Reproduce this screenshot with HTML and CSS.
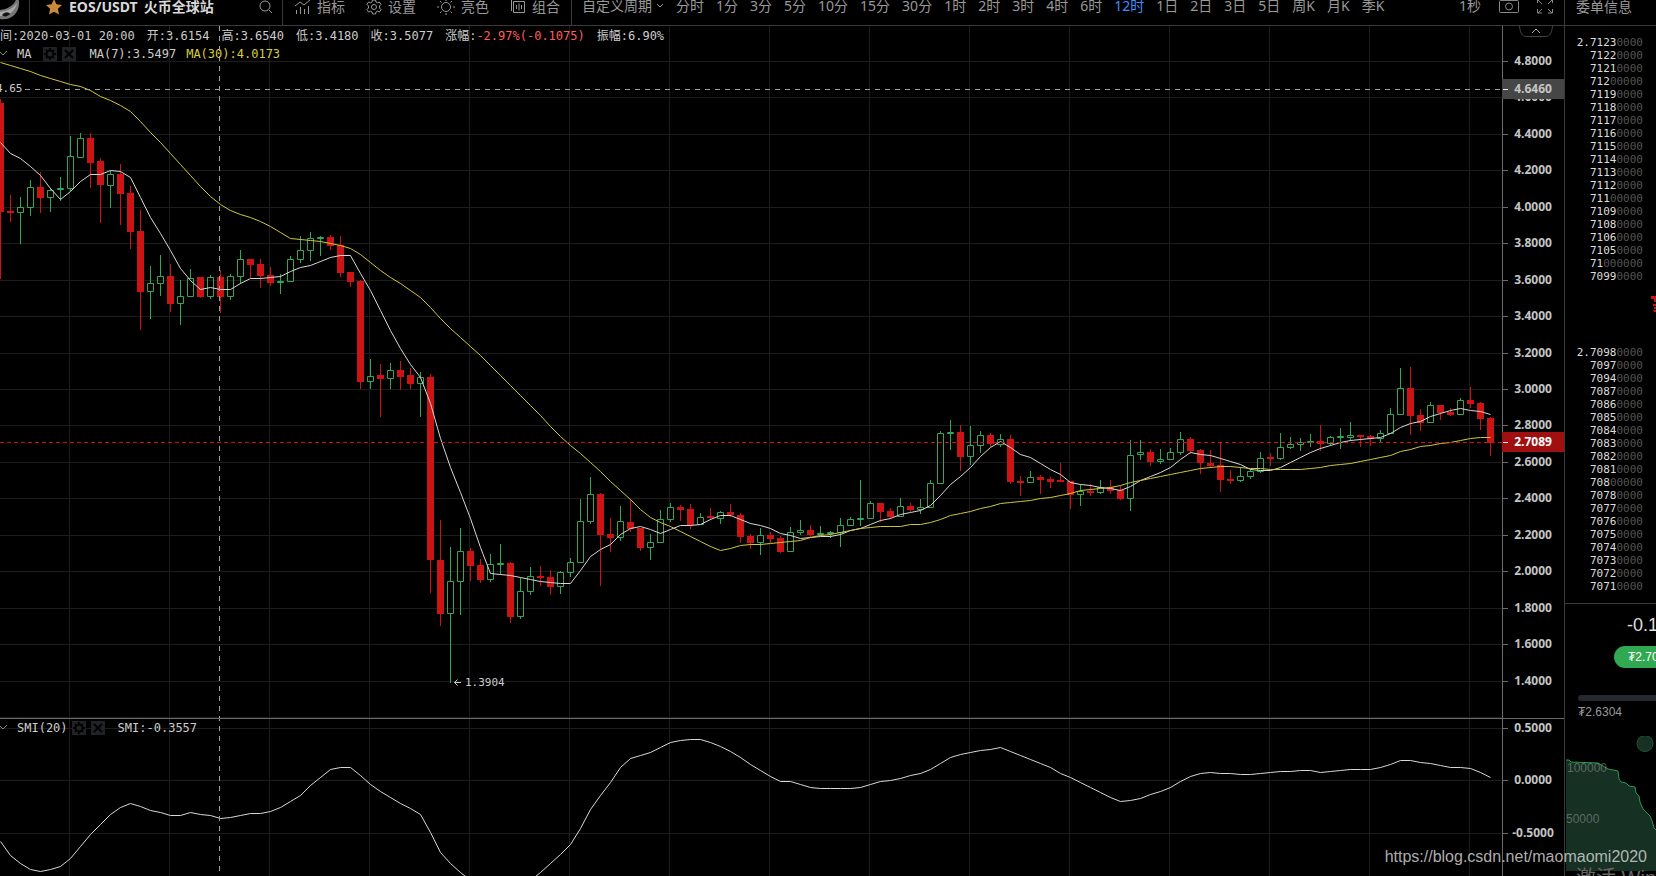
FILE: index.html
```html
<!DOCTYPE html>
<html lang="zh-CN">
<head>
<meta charset="utf-8">
<title>EOS/USDT 火币全球站</title>
<link rel="stylesheet" href="styles.css">
</head>
<body>
<div class="app">
  <header class="topbar">
    <div class="topbar-inner">
      <a class="logo" href="#" aria-label="Home">
        <svg width="24" height="30" viewBox="0 0 24 30"><path d="M0 27 C10 29 20 22 19 9 L17 4 C16 12 9 17 0 18 Z" fill="#777"/><path d="M0 20 C7 19 13 17 17 11 C15 20 8 24 0 24 Z" fill="#aaa"/><path d="M2 23 C5 19 9 20 10 22 C7 25 4 25 2 23" fill="#111"/></svg>
      </a>
      <div class="pair">
        <svg class="star" width="16" height="16" viewBox="0 0 16 16"><path d="M8 0l2.4 5.2 5.6.7-4.1 3.9 1.1 5.7L8 12.7l-5 2.8 1.100-5.700L0 5.900l5.600-.7z" fill="#c98a3c"/></svg>
        <h1>EOS/USDT <span>火币全球站</span></h1>
        <button class="search" aria-label="搜索"><svg width="14" height="14" viewBox="0 0 14 14" fill="none" stroke="#999"><circle cx="6" cy="6" r="5"/><path d="M10 10l3 3"/></svg></button>
      </div>
      <div class="tools">
        <button class="tool"><svg width="16" height="16" viewBox="0 0 16 16" fill="none" stroke="#999"><path d="M1.500 15v-4M5.500 15V8M9.500 15v-5M13.500 15V7M0 7l5-4 4 3 6-5"/></svg>指标</button>
        <button class="tool"><svg width="16" height="16" viewBox="0 0 16 16" fill="none" stroke="#999"><path d="M6.500 1h3l.5 2 1.500.8 2-.8 1.500 2.500-1.500 1.500v2l1.500 1.500-1.500 2.500-2-.8-1.500.8-.5 2h-3l-.5-2-1.500-.8-2 .8L1 10.500 2.500 9V7L1 5.500 2.500 3l2 .8L6 3z"/><circle cx="8" cy="8" r="2.500"/></svg>设置</button>
        <button class="tool"><svg width="18" height="16" viewBox="0 0 18 16" fill="none" stroke="#999"><circle cx="9" cy="8" r="4.500"/><path d="M9 0v2M9 14v2M0 8h2M16 8h2M3 2l1.500 1.500M15 2l-1.500 1.500M3 14l1.500-1.500M15 14l-1.500-1.500"/></svg>亮色</button>
        <button class="tool"><svg width="16" height="16" viewBox="0 0 16 16" fill="none" stroke="#999"><path d="M3.500 2.500h11v11h-11zM1.500 12V.5H12M6.500 6v4M9 4.500v7M11.500 6v4"/></svg>组合</button>
      </div>
      <nav class="periods">
        <button class="custom">自定义周期<svg width="8" height="6" viewBox="0 0 8 6" fill="none" stroke="#999"><path d="M1 1l3 3 3-3"/></svg></button>
        <button>分时</button><button>1分</button><button>3分</button><button>5分</button><button>10分</button><button>15分</button><button>30分</button><button>1时</button><button>2时</button><button>3时</button><button>4时</button><button>6时</button><button class="active">12时</button><button>1日</button><button>2日</button><button>3日</button><button>5日</button><button>周K</button><button>月K</button><button>季K</button>
      </nav>
      <div class="actions">
        <button>1秒</button>
        <button aria-label="截图"><svg width="20" height="16" viewBox="0 0 20 16" fill="none" stroke="#888"><rect x=".5" y="2.500" width="19" height="12" rx="1"/><circle cx="10" cy="8.500" r="3.500"/><path d="M6 2.500V1h7v1.500"/></svg></button>
        <button aria-label="全屏"><svg width="16" height="16" viewBox="0 0 16 16" fill="none" stroke="#888"><path d="M.5 5V1.500H5M11 1.500h4.500V5M15.500 11v4H11M5 15H.5v-4M1 2l4 4M15 2l-4 4M1 15l4-4M15 15l-4-4"/></svg></button>
      </div>
      <h2 class="book-title">委单信息</h2>
    </div>
  </header>

  <main class="main">
    <section class="chart">
      <svg id="chart" class="canvas" viewBox="0 26 1564 850" preserveAspectRatio="xMinYMin slice"></svg>
      <div class="legend legend-price">
        <div class="ohlc">
          <span>间:2020-03-01 20:00</span><span>开:3.6154</span><span>高:3.6540</span><span>低:3.4180</span><span>收:3.5077</span><span>涨幅:<b class="down">-2.97%(-0.1075)</b></span><span>振幅:6.90%</span>
        </div>
        <div class="indicator">
          <svg class="fold" width="8" height="6" viewBox="0 0 8 6"><path d="M0 1l3 3 4-4"/></svg>
          <span class="name">MA</span>
          <button class="mini" aria-label="设置"><svg width="14" height="14" viewBox="0 0 14 14"><circle cx="7" cy="7" r="3.500" class="ring"/><path d="M7 1v2M7 11v2M1 7h2M11 7h2M3 3l1 1M11 3l-1 1M3 11l1-1M11 11l-1-1"/></svg></button>
          <button class="mini" aria-label="关闭"><svg width="14" height="14" viewBox="0 0 14 14"><path d="M3 3l8 8M11 3l-8 8"/></svg></button>
          <span class="value">MA(7):3.5497</span><span class="value ma30">MA(30):4.0173</span>
        </div>
      </div>
      <div class="legend legend-smi">
        <div class="indicator">
          <svg class="fold" width="8" height="6" viewBox="0 0 8 6"><path d="M0 1l3 3 4-4"/></svg>
          <span class="name">SMI(20)</span>
          <button class="mini" aria-label="设置"><svg width="14" height="14" viewBox="0 0 14 14"><circle cx="7" cy="7" r="3.500" class="ring"/><path d="M7 1v2M7 11v2M1 7h2M11 7h2M3 3l1 1M11 3l-1 1M3 11l1-1M11 11l-1-1"/></svg></button>
          <button class="mini" aria-label="关闭"><svg width="14" height="14" viewBox="0 0 14 14"><path d="M3 3l8 8M11 3l-8 8"/></svg></button>
          <span class="value">SMI:-0.3557</span>
        </div>
      </div>
    </section>

    <aside class="side">
      <div class="book">
        <ol class="orders" id="asks"></ol>
        <div class="last"><svg width="5" height="18" viewBox="0 0 5 18" fill="#cc1414"><path d="M0 0h5v3H0zM3 3h2v3H3zM2 8h3v2H2zM3 11h2v2H3zM2 14h3v2H3z"/></svg></div>
        <ol class="orders" id="bids"></ol>
      </div>
      <div class="stats">
        <div class="change">-0.1075</div>
        <div class="pill">₮2.7089</div>
        <div class="range"></div>
        <div class="low">₮2.6304</div>
        <svg class="depth" width="91" height="140" viewBox="1565 736 91 140">
          <circle cx="1645" cy="743.500" r="8" fill="#163123" stroke="#1f5a33"/>
          <path d="M1566 760H1569L1571 762 1598 763 1603 766 1608 769 1618 771 1619 779 1621 782 1626 783 1629 786 1635 787 1636 793 1639 796 1640 802 1643 809 1650 816 1652 821 1654 828 1656 830V871H1566Z" fill="#163123"/>
          <path d="M1566 760H1569L1571 762 1598 763 1603 766 1608 769 1618 771 1619 779 1621 782 1626 783 1629 786 1635 787 1636 793 1639 796 1640 802 1643 809 1650 816 1652 821 1654 828 1656 830" fill="none" stroke="#2a9a4c"/>
          <text x="1567" y="772">100000</text><text x="1566" y="823">50000</text>
        </svg>
      </div>
    </aside>
  </main>
  <div class="watermark">https://blog.csdn.net/maomaomi2020</div>
  <div class="activate">激活 Windows</div>
</div>
<script src="chart.js"></script>
</body>
</html>
```

FILE: styles.css
```css
* { box-sizing: border-box; }
body {
  margin: 0;
  background: #000;
  color: #ccc;
  font: 12px/16px "Liberation Sans", "Noto Sans CJK SC", sans-serif;
}
button {
  border: 0;
  padding: 0;
  background: none;
  color: inherit;
  font: inherit;
  display: flex;
  align-items: center;
  cursor: pointer;
  white-space: nowrap;
}
h1, h2, ol { margin: 0; padding: 0; }
svg { display: block; flex: none; }

.app {
  position: relative;
  height: 100vh;
  display: flex;
  flex-direction: column;
  overflow: hidden;
}

.topbar {
  flex: 0 0 26px;
  border-bottom: 1px solid #3a3a3a;
  overflow: hidden;
}
.topbar-inner {
  display: flex;
  height: 36px;
  margin-top: -12px;
  color: #999;
  font: 14px/20px "Noto Sans", "Noto Sans CJK SC", sans-serif;
}
.topbar-inner > * { display: flex; align-items: center; flex: none; }
.logo { width: 30px; border-right: 1px solid #3a3a3a; }
.pair { width: 253px; padding-left: 16px; border-right: 1px solid #3a3a3a; }
.pair h1 {
  flex: 1;
  display: flex;
  gap: 6px;
  margin-left: 7px;
  color: #d8d8d8;
  font: 700 14px/20px "Noto Sans", "Noto Sans CJK SC", sans-serif;
  white-space: nowrap;
}
.pair .search { margin-right: 9px; }
.tools { width: 289px; padding-left: 12px; gap: 21px; border-right: 1px solid #3a3a3a; }
.tool { gap: 6px; }
.custom { gap: 4px; }
.periods .active { color: #3f8cff; }
.topbar-inner .periods { flex: 1; min-width: 0; padding-left: 10px; gap: 12px; }
.actions { gap: 18px; padding-right: 11px; }
.book-title {
  width: 92px;
  padding-left: 11px;
  border-left: 1px solid #3a3a3a;
  font-size: 14px;
  font-weight: 400;
}
.topbar-inner .logo, .pair, .tools, .book-title { height: 38px; }

.main { flex: 1; min-height: 0; display: flex; }
.chart { position: relative; flex: 1; min-width: 0; overflow: hidden; }
.canvas { width: 100%; height: 100%; }
.grid { stroke: #1c1c1c; fill: none; }
.axis { stroke: #6a6a6a; fill: none; }
.cursor { stroke: #a0a0a0; stroke-dasharray: 5 5; fill: none; }
.last-line { stroke: #cc1414; stroke-dasharray: 4 3; }
.up { stroke: #2fa858; fill: none; }
.fall { fill: #cc1414; }
.ma7, .smi { stroke: #d8d8d8; fill: none; }
.ma30-line { stroke: #d2c836; fill: none; }
.scale { fill: #c4c4c4; font: 700 12px "Open Sans", sans-serif; text-anchor: middle; }
.tag-cursor { fill: #464646; }
.tag-last { fill: #a01010; }
.bright { fill: #fff; }
.note { fill: #ccc; font: 11px "DejaVu Sans Mono", monospace; }

.legend { position: absolute; left: 0; font: 12px/16px "DejaVu Sans Mono", "Noto Sans CJK SC", monospace; white-space: nowrap; }
.legend-price { top: 2px; }
.legend-smi { top: 694px; }
.ohlc { display: flex; gap: 12px; }
.ohlc b { font-weight: 400; }
.down { color: #ff5f57; }
.indicator { display: flex; align-items: center; height: 16px; }
.ohlc + .indicator { margin-top: 2px; }
.fold { stroke: #888; fill: none; margin-right: 9px; }
.name { margin-right: 4px; }
.legend-price .name { margin-right: 12px; }
.mini { width: 14px; height: 14px; margin-right: 5px; background: #202226; }
.mini svg { stroke: #000; stroke-width: 2; fill: none; }
.value { margin-left: 8px; }
.value + .value { margin-left: 10px; }
.ma30 { color: #d8ce3c; }

.side {
  flex: 0 0 92px;
  display: flex;
  flex-direction: column;
  border-left: 1px solid #3a3a3a;
  overflow: hidden;
}
.book { padding: 10px 13px 10px 0; border-bottom: 1px solid #3a3a3a; flex: 0 0 578px; }
.orders { list-style: none; font: 11px/13px "DejaVu Sans Mono", monospace; text-align: right; color: #ddd; }
.orders i { font-style: normal; color: #555; }
.last { display: flex; justify-content: flex-end; height: 63px; padding-top: 13px; margin-right: -13px; }
.stats { display: flex; flex-direction: column; }
.change { margin: 10px 0 0 62px; font-size: 18px; line-height: 22px; white-space: nowrap; color: #ddd; }
.pill {
  width: 76px;
  height: 22px;
  margin: 10px 0 0 49px;
  padding-left: 14px;
  border-radius: 11px;
  background: #31a952;
  color: #fff;
  line-height: 22px;
  white-space: nowrap;
}
.range { height: 6px; margin: 27px 0 0 13px; border-radius: 3px 0 0 3px; background: #25282c; }
.low { margin: 3px 0 0 13px; color: #999; }
.depth { margin-top: 16px; }
.depth text { fill: #9a9a9a; fill-opacity: .55; font: 12px "Liberation Sans", sans-serif; }

.watermark, .activate { position: absolute; white-space: nowrap; pointer-events: none; }
.watermark { right: 9px; bottom: 9px; font-size: 16px; line-height: 20px; color: rgba(220, 220, 220, .8); }
.activate { left: calc(100% - 80px); bottom: -17px; font-size: 20px; line-height: 30px; color: #666; }
```

FILE: chart.js
```js
// Each candle: direction, high, body top, body bottom, low (chart units).
const candles = `R 99 103 212 279;R 195 211 213 222;G 197 207 213 244;G 180 187 208 216;R 172 187 198 213;G 188 190 198 212;G 177 188 190 201;G 136 156 189 191;G 133 138 158 158;R 133 138 163 188
R 158 161 185 223;G 171 174 186 208;R 164 174 194 225;R 186 193 232 249;R 210 231 292 330;G 266 283 292 319;G 255 276 284 296;R 264 276 304 312;G 280 296 304 325;G 269 278 297 297
R 277 277 297 298;G 275 277 297 299;R 270 277 297 313;G 274 276 297 300;G 250 259 277 284;R 259 259 265 278;R 259 264 276 288;R 267 275 283 286;G 274 281 283 294;G 256 259 282 282
G 236 250 260 263;G 232 238 251 261;G 236 237 239 256;R 235 237 246 250;R 236 245 273 277;R 272 272 282 287;R 280 281 382 389;G 359 376 382 389;R 364 375 379 417;G 363 370 379 389
R 361 370 377 390;R 368 375 384 389;G 372 377 384 417;R 374 377 560 593;R 520 560 614 626;G 547 581 614 683;G 528 551 582 615;R 548 551 566 581;R 559 565 580 583;G 554 564 580 582
G 544 563 565 575;R 562 563 617 623;G 578 591 617 619;G 567 576 592 595;R 566 576 578 586;R 570 577 587 595;G 571 572 587 594;G 558 562 573 577;G 499 521 563 563;G 477 494 522 524
R 493 494 535 586;R 518 534 538 552;G 506 521 538 541;R 499 522 529 532;R 528 528 548 551;G 534 542 548 560;G 510 519 543 543;G 503 507 520 522;R 505 507 510 521;R 504 509 525 529
G 513 517 525 525;R 508 516 518 520;G 511 512 519 524;R 504 512 515 517;R 513 515 537 543;R 534 536 543 549;G 528 535 543 555;R 532 535 539 543;R 536 538 552 553;G 527 532 552 552
G 520 530 533 535;R 525 530 535 537;G 526 533 535 535;G 531 532 534 538;G 518 525 533 547;G 517 519 526 526;G 480 518 520 526;G 501 503 519 519;R 503 503 512 522;R 508 511 517 519
G 498 506 517 517;R 503 506 510 512;G 499 507 510 514;G 480 483 508 508;G 431 433 484 484;G 420 432 434 450;R 425 432 457 471;G 426 445 457 465;G 431 435 446 453;R 433 435 444 447
G 434 439 445 447;R 435 439 482 484;R 476 481 483 496;G 471 477 483 483;R 475 477 480 494;R 477 479 482 488;R 463 480 482 482;R 481 481 495 509;G 484 491 495 506;R 484 491 493 496
G 480 487 493 494;R 480 487 491 494;R 486 490 499 500;G 440 455 499 511;G 440 452 455 460;R 449 452 462 466;G 449 459 462 464;G 448 452 460 460;G 432 439 453 455;R 437 439 451 454
R 449 450 463 474;R 450 463 466 468;R 442 465 480 492;R 470 479 481 484;G 467 476 481 482;G 469 471 477 479;G 452 458 472 473;R 453 457 459 466;G 433 447 459 460;G 437 444 448 449
G 438 442 445 451;G 434 441 443 447;R 425 441 444 451;G 436 437 444 446;G 428 436 438 449;G 422 435 438 441;R 435 435 437 447;R 435 436 439 446;G 430 433 439 443;G 408 414 434 434
G 368 388 415 415;R 367 388 416 435;R 409 415 423 431;G 402 405 423 423;R 405 405 413 420;R 408 412 415 416;G 398 400 415 415;R 387 400 404 408;R 402 403 419 430;R 417 418 443 456`
  .split(/[;\n]/).map(row => row.trim().split(' '));

// Line series, one value for every candle.
const ma7 = [142,153,158,166,175,188,199,191,181,174,174,170,171,177,197,217,233,250,268,280,289,287,289,289,283,278,278,277,276,271,267,265,261,257,255,255,273,290,310,330,348,364,377,403,438,467,492,518,547,573,574,575,577,579,581,582,583,583,570,556,549,544,534,528,526,529,533,529,525,525,524,519,515,515,519,523,525,528,533,535,538,537,536,536,534,530,528,524,520,518,514,512,510,505,495,484,476,467,456,447,441,447,454,457,463,469,474,482,484,485,487,488,490,486,480,476,472,467,459,452,454,455,458,461,464,469,470,470,467,462,457,452,448,445,442,440,439,438,437,433,427,423,421,416,413,410,408,410,411,414];
const ma30 = [62,65,68,71,75,78,81,84,86,90,96,100,105,111,121,132,142,153,164,175,186,196,204,210,214,217,221,226,232,238,239,240,241,243,245,248,254,262,270,277,283,290,297,307,318,328,337,346,355,365,375,385,395,405,415,426,436,445,453,462,471,481,490,499,509,517,522,526,531,536,541,546,550,548,545,544,544,543,542,541,540,537,535,534,532,530,528,527,526,526,526,524,524,522,519,515,513,511,508,506,503,502,501,500,498,497,495,493,490,489,488,487,485,482,480,478,476,474,472,470,468,467,466,466,467,468,468,469,469,469,469,468,467,465,464,463,461,459,457,455,451,449,446,445,443,442,440,438,437,437];
const smi = [841,855,863,869,871,869,866,858,846,834,824,814,807,803,806,810,812,815,815,812,814,815,818,817,815,813,813,811,807,801,795,785,777,769,767,767,775,784,791,797,803,808,814,832,852,863,872,880,888,892,892,890,886,880,872,863,854,844,828,809,795,782,767,758,755,752,747,742,740,739,739,742,746,751,757,764,770,776,781,781,784,787,788,788,788,788,787,784,781,780,778,775,773,769,763,757,754,752,750,749,747,751,755,759,763,767,773,777,782,787,792,797,801,800,798,794,791,787,781,776,773,772,773,773,774,774,773,772,771,771,770,770,772,771,770,769,769,769,767,764,760,760,762,763,765,767,767,768,772,777];

const parts = [];
const line = (cls, d) => parts.push(`<path class="${cls}" d="${d}"/>`);
const text = (cls, x, y, s) => parts.push(`<text class="${cls}" x="${x}" y="${y}">${s}</text>`);
const series = (cls, values) => line(cls, 'M' + values.map((y, i) => `${i * 10 + 0.5} ${y + 0.5}`).join('L'));

const priceRows = [61, 97, 134, 170, 207, 243, 280, 316, 353, 389, 425, 462, 498, 535, 571, 608, 644, 681];
const smiRows = [[728, '0.5000'], [780, '0.0000'], [833, '-0.5000']];

for (let x = 69; x < 1502; x += 100) line('grid', `M${x}.5 26V876`);
for (const y of [...priceRows, 717, ...smiRows.map(r => r[0])]) line('grid', `M0 ${y}.5H1502`);

candles.forEach(([dir, high, top, bottom, low], i) => {
  const x = i * 10;
  if (dir === 'G') {
    line('up', `M${x + 0.5} ${high}V${top}M${x + 0.5} ${bottom}V${low}M${x - 2.5} ${+top + 0.5}h6V${bottom - 0.5}h-6Z`);
  } else {
    parts.push(`<rect class="fall" x="${x}" y="${high}" width="1" height="${low - high}"/>`);
    parts.push(`<rect class="fall" x="${x - 3}" y="${top}" width="7" height="${bottom - top}"/>`);
  }
});

series('ma7', ma7);
series('ma30-line', ma30);
series('smi', smi);

line('last-line', 'M0 442.5H1502');
line('cursor', 'M25 89.5H1502');
line('cursor', 'M219.5 26V876');
line('axis', 'M0 718.5H1564M1502.5 26V876');

priceRows.forEach((y, i) => {
  line('axis', `M1503 ${y}.5H1508`);
  text('scale', 1533, y + 4, (4.8 - i * 0.2).toFixed(4));
});
smiRows.forEach(([y, label]) => {
  line('axis', `M1503 ${y}.5H1508`);
  text('scale', 1533, y + 4, label);
});

parts.push('<rect class="tag-cursor" x="1502" y="79" width="62" height="20"/>');
text('scale', 1533, 93, '4.6460');
parts.push('<rect class="tag-last" x="1502" y="432" width="62" height="20"/>');
text('scale bright', 1533, 446, '2.7089');
parts.push('<path d="M1503 89.5H1508M1503 442.5H1508" stroke="#eee"/>');
parts.push('<path d="M1519.5 26C1520 32 1522 36.5 1526 36.5H1546C1550 36.5 1552 32 1552.500 26" fill="none" stroke="#444"/>');
parts.push('<path d="M1532 33L1536 29 1540 33" fill="none" stroke="#aaa"/>');

parts.push('<path d="M461 682.500H454.500M457.500 679.500L454.500 682.500 457.500 685.500" fill="none" stroke="#ccc"/>');
text('note', 465, 686, '1.3904');
text('note', -4, 92, '4.65');
document.getElementById('chart').innerHTML = parts.join('');

// Order book: significant digits bright, padding zeros dim.
const asks = ['2.7123', '7122', '7121', '712', '7119', '7118', '7117', '7116', '7115', '7114', '7113', '7112', '711', '7109', '7108', '7106', '7105', '71', '7099'];
const bids = ['2.7098', '7097', '7094', '7087', '7086', '7085', '7084', '7083', '7082', '7081', '708', '7078', '7077', '7076', '7075', '7074', '7073', '7072', '7071'];
const rows = list => list.map(p => {
  const width = p.includes('.') ? 10 : 8;
  return `<li>${p}<i>${'0'.repeat(width - p.length)}</i></li>`;
}).join('');
document.getElementById('asks').innerHTML = rows(asks);
document.getElementById('bids').innerHTML = rows(bids);
```
